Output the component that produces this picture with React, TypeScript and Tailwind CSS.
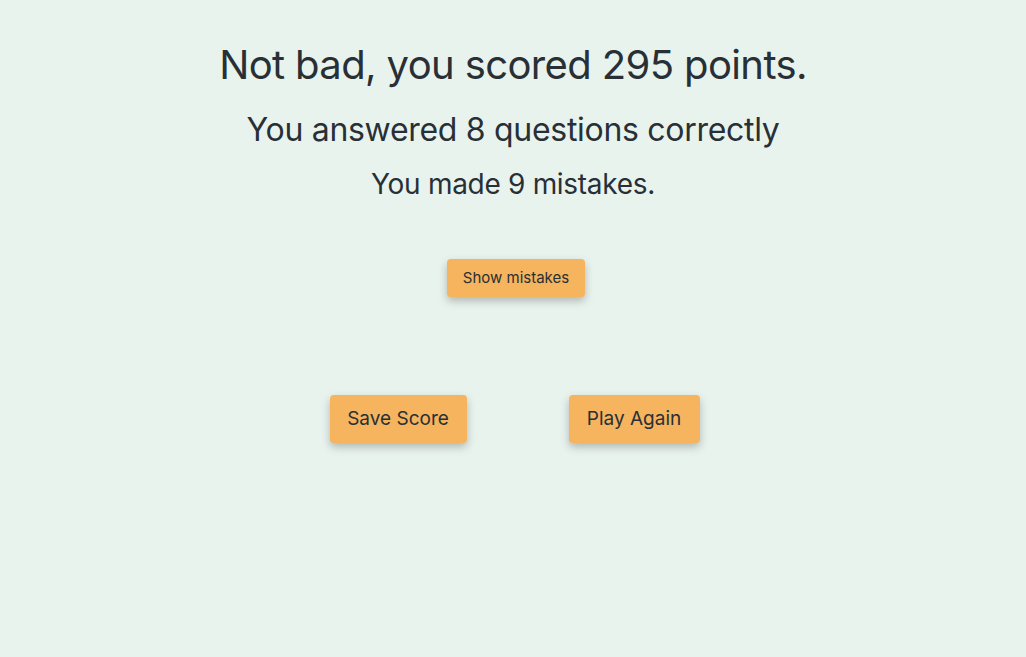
export default function App() {
  return (
    <div className="min-h-screen w-full bg-[#e9f3ee] text-[#283036] font-['Inter',sans-serif]">
      <div className="flex flex-col items-center pt-[39px]">
        <h1 className="text-[40px] leading-[52px] font-normal tracking-[-0.62px]">
          Not bad, you scored 295 points.
        </h1>
        <h2 className="mt-[19px] text-[32px] leading-[40px] font-normal tracking-[-0.3px]">
          You answered 8 questions correctly
        </h2>
        <p className="mt-[17px] text-[28px] leading-[34px] tracking-[-0.3px]">You made 9 mistakes.</p>

        <button className="mt-[58px] ml-[6px] h-[38px] px-[16px] rounded bg-[#f5b45d] text-[15px] text-[#283036] shadow-[0_4px_8px_rgba(0,0,0,0.25)]">
          Show mistakes
        </button>

        <div className="mt-[98px] flex gap-[102px] pl-[3px]">
          <button className="h-[48px] w-[137px] rounded bg-[#f5b45d] text-[19px] text-[#283036] shadow-[0_4px_8px_rgba(0,0,0,0.25)]">
            Save Score
          </button>
          <button className="h-[48px] w-[131px] rounded bg-[#f5b45d] text-[19px] text-[#283036] shadow-[0_4px_8px_rgba(0,0,0,0.25)]">
            Play Again
          </button>
        </div>
      </div>
    </div>
  );
}
